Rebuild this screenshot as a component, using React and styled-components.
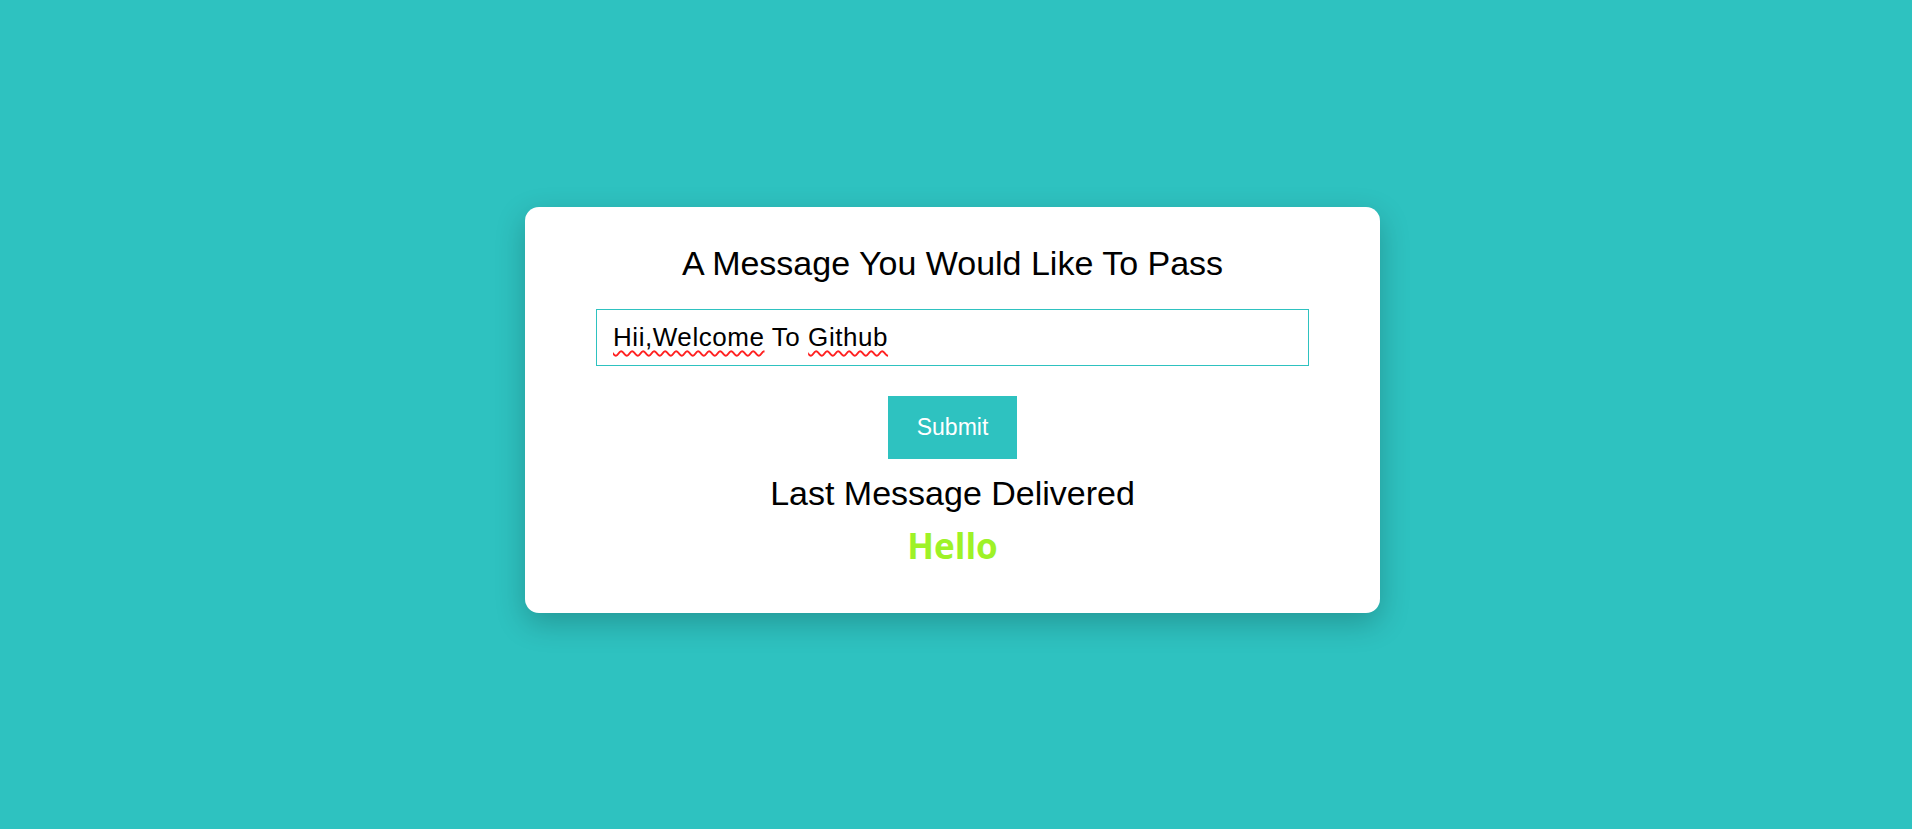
import React, { useState } from "react";
import styled, { createGlobalStyle } from "styled-components";

const GlobalStyle = createGlobalStyle`
  html, body {
    margin: 0;
    padding: 0;
  }
  body {
    background: #2ec2c0;
    font-family: "Liberation Sans", Arial, sans-serif;
  }
`;

const Page = styled.div`
  min-height: 100vh;
  display: flex;
  align-items: center;
  justify-content: center;
  padding: 0 7px 9px 0;
  box-sizing: border-box;
`;

const Card = styled.div`
  width: 855px;
  box-sizing: border-box;
  background: #fff;
  border-radius: 14px;
  box-shadow: 0 10px 30px rgba(0, 0, 0, 0.22);
  padding: 37px 0 48px;
  display: flex;
  flex-direction: column;
  align-items: center;
`;

const Title = styled.h1`
  margin: 0;
  font-size: 34px;
  line-height: 38px;
  font-weight: 400;
  color: #000;
`;

const Field = styled.div`
  position: relative;
  width: 713px;
  height: 57px;
  margin-top: 27px;
`;

const Input = styled.input`
  width: 100%;
  height: 100%;
  box-sizing: border-box;
  border: 1px solid #2ec2c0;
  outline: none;
  padding: 0 16px;
  font-family: "Liberation Sans", Arial, sans-serif;
  font-size: 26px;
  letter-spacing: 0.55px;
  color: #000;
`;

// spellcheck squiggles drawn over the input text
const Squiggles = styled.div`
  position: absolute;
  inset: 0;
  padding: 0 17px;
  display: flex;
  align-items: center;
  font-size: 26px;
  letter-spacing: 0.55px;
  color: transparent;
  pointer-events: none;
  white-space: pre;
`;

const Wavy = styled.span`
  text-decoration: underline wavy #ff2020;
  text-decoration-thickness: 1.5px;
  text-underline-offset: 4px;
`;

const Button = styled.button`
  margin-top: 30px;
  width: 129px;
  height: 63px;
  border: none;
  background: #2ec2c0;
  color: #fff;
  font-family: "Liberation Sans", Arial, sans-serif;
  font-size: 23px;
  cursor: pointer;
`;

const Subtitle = styled.h2`
  margin: 15px 0 0;
  font-size: 34px;
  line-height: 38px;
  font-weight: 400;
  color: #000;
`;

const Delivered = styled.h3`
  margin: 15px 0 0;
  font-family: "Open Sans", "DejaVu Sans", sans-serif;
  font-size: 35px;
  line-height: 38px;
  font-weight: 700;
  color: #9ef227;
`;

export default function App() {
  const [message, setMessage] = useState("Hii,Welcome To Github");
  const [last] = useState("Hello");

  return (
    <Page>
      <GlobalStyle />
      <Card>
        <Title>A Message You Would Like To Pass</Title>
        <Field>
          <Input
            type="text"
            value={message}
            onChange={(e) => setMessage(e.target.value)}
          />
          {message === "Hii,Welcome To Github" && (
            <Squiggles>
              <Wavy>Hii,Welcome</Wavy> To <Wavy>Github</Wavy>
            </Squiggles>
          )}
        </Field>
        <Button>Submit</Button>
        <Subtitle>Last Message Delivered</Subtitle>
        <Delivered>{last}</Delivered>
      </Card>
    </Page>
  );
}
